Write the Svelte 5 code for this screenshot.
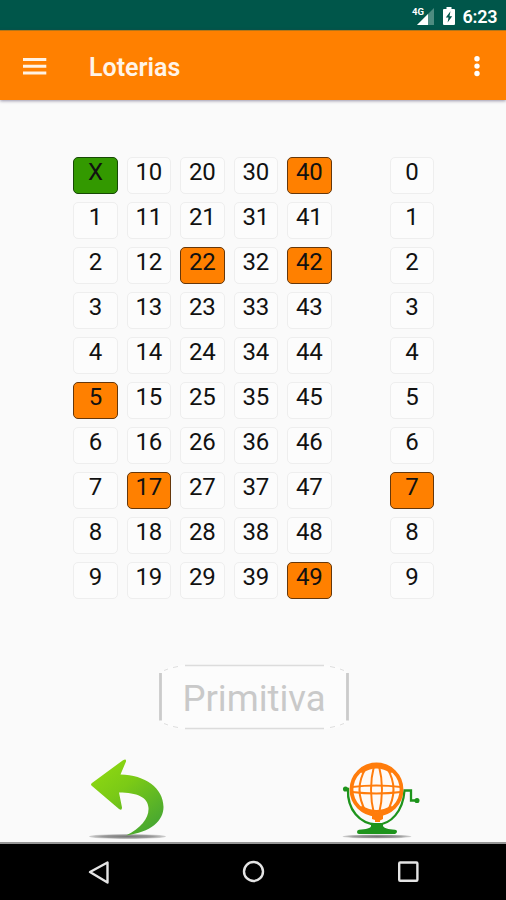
<script>
  const columns = [0, 10, 20, 30, 40].map((start) =>
    Array.from({ length: 10 }, (_, i) => start + i)
  );
  const refunds = Array.from({ length: 10 }, (_, i) => i);
  const picked = [5, 17, 22, 40, 42, 49];
  const refund = 7;
</script>

<div class="screen">
  <div class="status">
    <svg class="signal" width="24" height="20" viewBox="0 0 24 20">
      <path d="M23 1V18H6Z" fill="#4d8b80" />
      <path d="M17 7V18H6Z" fill="#fff" />
      <text x="1" y="7.5" font-size="9" font-weight="700" fill="#fff" textLength="12" lengthAdjust="spacingAndGlyphs">4G</text>
    </svg>
    <svg class="battery" width="12" height="18" viewBox="0 0 12 18">
      <path d="M3.5 0h5v2H11q1 0 1 1v14q0 1-1 1H1q-1 0-1-1V3q0-1 1-1h2.5z" fill="#fff" />
      <path d="M7.5 4.2 2.8 10.5h2.7L4.6 15.4 9.2 9.2H6.5z" fill="#00564a" />
    </svg>
    <span class="time">6:23</span>
  </div>

  <header>
    <svg class="menu" width="24" height="18" viewBox="0 0 24 18">
      <path d="M0 1.500H23.3M0 8.200H23.3M0 15H23.3" stroke="#fff2e4" stroke-width="3" />
    </svg>
    <h1>Loterias</h1>
    <svg class="more" width="6" height="22" viewBox="0 0 6 22" fill="#fff">
      <circle cx="3" cy="2.7" r="2.7" /><circle cx="3" cy="10.1" r="2.7" /><circle cx="3" cy="17.5" r="2.7" />
    </svg>
  </header>

  <main>
    <div class="board">
      <div class="numbers">
        {#each columns as column}
          <div class="column">
            {#each column as n}
              <div class="cell" class:cross={n === 0} class:picked={picked.includes(n)}><span>{n === 0 ? 'X' : n}</span></div>
            {/each}
          </div>
        {/each}
      </div>
      <div class="column">
        {#each refunds as n}
          <div class="cell" class:picked={n === refund}><span>{n}</span></div>
        {/each}
      </div>
    </div>

    <div class="game">
      <svg class="frame" width="190" height="66" viewBox="0 0 190 66" fill="none">
        <rect x="1" y="1" width="188" height="64" rx="24" ry="10" fill="#fcfcfc" />
        <path d="M26 1.500H165M26 64.500H165" stroke="#dcdcdc" stroke-width="1.3" />
        <path d="M1.500 9V56.500M188.500 9V56.500" stroke="#cbcbcb" stroke-width="2.8" />
        <path d="M5 6.500l4-1.500M14 3.500l5-1M5 59.500l4 1.500M14 62.500l5 1M185 6.500l-4-1.500M176 3.500l-5-1M185 59.500l-4 1.500M176 62.500l-5 1" stroke="#dedede" />
      </svg>
      <span>Primitiva</span>
    </div>

    <div class="actions">
      <svg width="80" height="84" viewBox="0 0 80 84">
        <defs>
          <linearGradient id="leaf" x1="0" y1="0" x2="0.75" y2="1">
            <stop offset="0" stop-color="#93dc10" />
            <stop offset="0.45" stop-color="#7bca16" />
            <stop offset="1" stop-color="#46a632" />
          </linearGradient>
          <radialGradient id="shade">
            <stop offset="0" stop-color="#777" />
            <stop offset="0.65" stop-color="#999" />
            <stop offset="1" stop-color="#aaa" stop-opacity="0.5" />
          </radialGradient>
        </defs>
        <ellipse cx="38.500" cy="78.500" rx="38.500" ry="2.400" fill="url(#shade)" />
        <path d="M3 25 34 2.200Q37.500 0.500 37 3.500L31.500 16.500C56 17 74.500 30 74.500 49C74.500 63 62 74 37 77.500C52 70 60 60 59.500 50C59 39 48 34.500 30 34.500L33 49.500Q33 53 30 51L3 28Q1 26.500 3 25Z" fill="url(#leaf)" />
      </svg>

      <svg width="80" height="84" viewBox="0 0 80 84" fill="none">
        <ellipse cx="36" cy="78.500" rx="34.500" ry="2" fill="url(#shade)" />
        <g stroke="#1e941c" stroke-width="2.300">
          <path d="M4 31H7C6 52 19 65.500 35 66.500C50 67 62 53 63.500 32.500H70V42.500H77" />
          <circle cx="4.500" cy="31" r="1.800" fill="#1e941c" stroke-width="1.500" />
          <circle cx="76" cy="42.500" r="1.800" fill="#1e941c" stroke-width="1.500" />
        </g>
        <path d="M30 65H42V68C43 70 47 71.500 54 71.700Q56 71.700 56 73.500T54 76H18Q16 76 16 74T18 71.700C25 71.500 30 70 30 68Z" fill="#1e941c" />
        <path d="M31 57H42V61L39 62.500V64H34V62L31 61Z" fill="#ff7c0b" />
        <circle cx="35.500" cy="31.500" r="25" fill="#fffaf5" stroke="#ff7c0b" stroke-width="3.800" />
        <g stroke="#ff7c0b" stroke-width="2">
          <path d="M11 29Q35 26 60 29M11 34Q35 37 60 34" />
          <path d="M33 8Q27 31 33 56M38 8Q44 31 38 56M25 10Q12 31 25 54M46 10Q59 31 46 54" />
          <path d="M20 14Q35.500 4 51 14M20 49Q35.500 58 51 49" stroke-width="3" />
        </g>
      </svg>
    </div>
  </main>

  <nav>
    <svg width="24" height="26" viewBox="0 0 24 26"><path d="M20.500 2.500V22.500L3 12Z" /></svg>
    <svg width="24" height="26" viewBox="0 0 24 26"><circle cx="11.500" cy="11.500" r="9.500" /></svg>
    <svg width="24" height="26" viewBox="0 0 24 26"><rect x="3.200" y="2.500" width="18.200" height="18.200" rx="1" /></svg>
  </nav>
</div>

<style>
  .screen {
    width: 506px;
    height: 900px;
    overflow: hidden;
    display: flex;
    flex-direction: column;
    background: #fafafa;
    font-family: Roboto, "Liberation Sans", sans-serif;
  }
  svg { display: block; flex: none; }
  .status {
    height: 30px;
    flex: none;
    display: flex;
    justify-content: flex-end;
    align-items: flex-start;
    padding: 7px 8.500px 0 0;
    box-sizing: border-box;
    background: #00564a;
  }
  .battery { margin-left: 8px; }
  .time {
    width: 35px;
    margin-left: 8px;
    font-size: 18px;
    line-height: 19px;
    font-weight: 600;
    letter-spacing: -0.2px;
    color: #fff;
  }
  header {
    height: 70px;
    flex: none;
    display: flex;
    align-items: center;
    padding: 2px 26px 0 23px;
    box-sizing: border-box;
    background: #ff8000;
    border-top: 1px solid #b57618;
    box-shadow: 0 1px 3px rgba(60, 50, 90, 0.5);
    position: relative;
  }
  h1 {
    margin: 2px auto 0 42px;
    font-size: 25px;
    font-weight: 600;
    line-height: 30px;
    color: #fff4e8;
  }
  main {
    flex: 1;
    display: flex;
    flex-direction: column;
    padding-top: 57px;
  }
  .board { display: flex; gap: 58px; padding-left: 73px; }
  .numbers { display: flex; gap: 9px; }
  .column { display: flex; flex-direction: column; gap: 8px; }
  .cell {
    width: 44.500px;
    height: 37px;
    box-sizing: border-box;
    border: 1px solid #eee;
    border-radius: 5px;
    background: #fcfcfc;
    color: #111;
    font-size: 24px;
    line-height: 28px;
    letter-spacing: -0.3px;
    text-align: center;
  }
  .picked { background: #ff8000; border-color: #65370b; }
  .cross { background: #339900; border-color: #164806; }
  .game {
    position: relative;
    width: 190px;
    height: 66px;
    margin: 65px 0 0 159px;
    display: flex;
    align-items: center;
    justify-content: center;
    color: #c9c9c9;
    font-size: 36.500px;
  }
  .frame { position: absolute; inset: 0; }
  .game span { position: relative; top: 1px; }
  .actions {
    display: flex;
    gap: 172px;
    padding: 28px 0 0 89px;
  }
  nav {
    height: 59px;
    flex: none;
    display: flex;
    justify-content: space-between;
    padding: 16px 86px 0 87px;
    box-sizing: border-box;
    background: #000;
    border-top: 2px solid #969696;
  }
  nav path, nav circle, nav rect {
    fill: none;
    stroke: #e4e4e4;
    stroke-width: 2.400;
    stroke-linejoin: round;
  }
</style>
